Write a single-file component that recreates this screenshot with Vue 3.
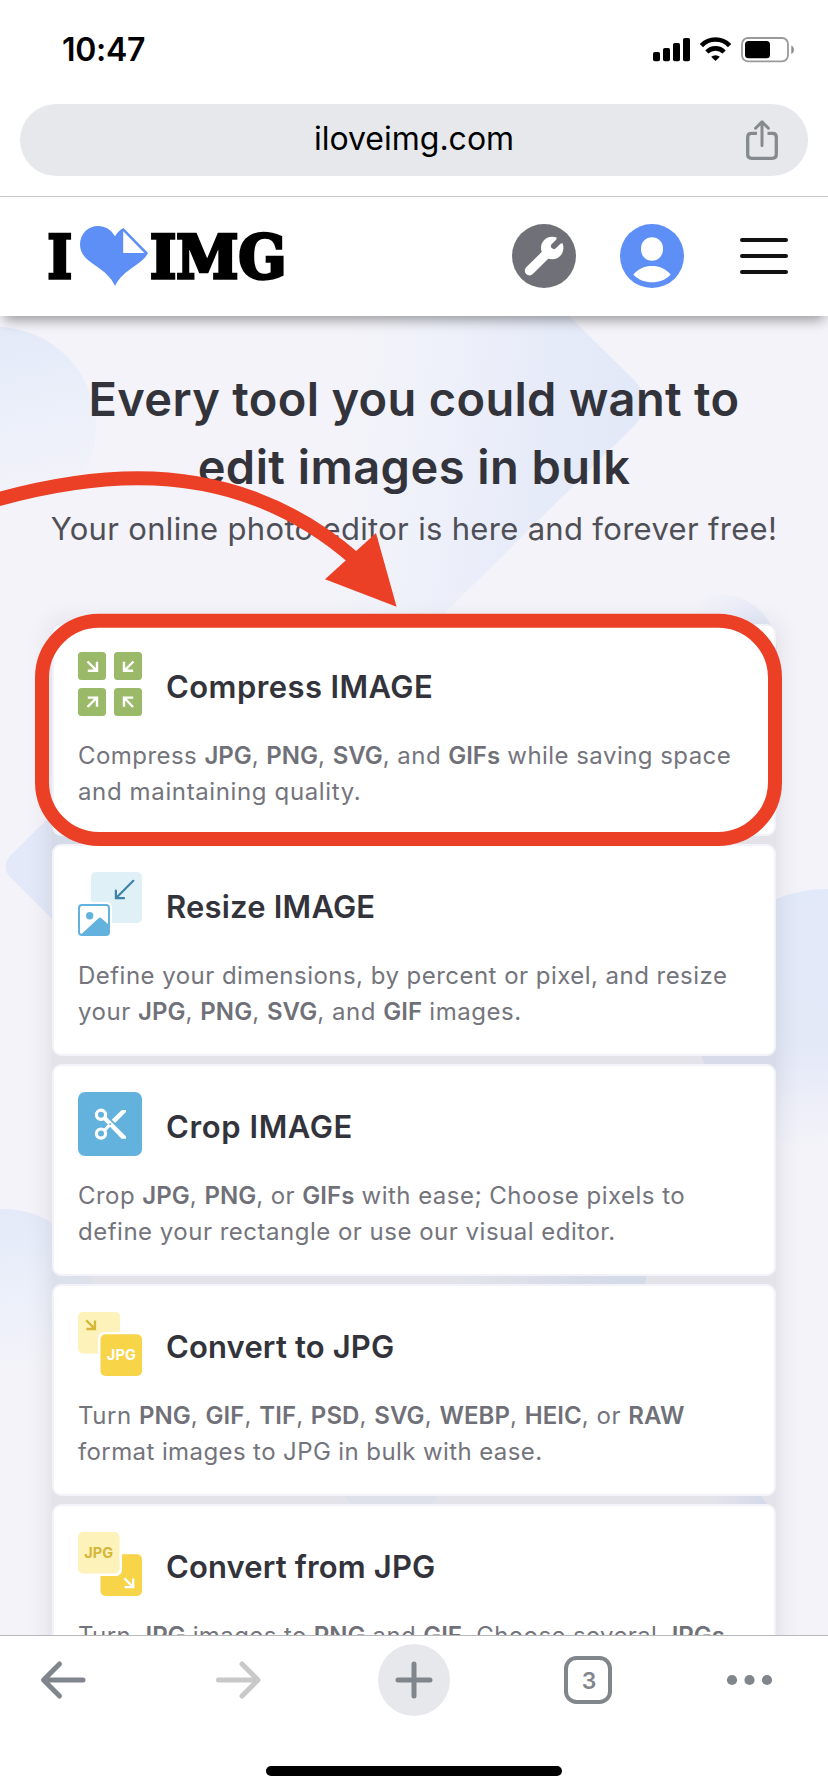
<script setup>
const rawTools = [
  {
    id: 'compress',
    title: 'Compress IMAGE',
    tracking: 0.42,
    lines: [
      ['Compress *JPG*, *PNG*, *SVG*, and *GIFs* while saving space', 0.45],
      ['and maintaining quality.', 0.63],
    ],
  },
  {
    id: 'resize',
    title: 'Resize IMAGE',
    tracking: 0.2,
    lines: [
      ['Define your dimensions, by percent or pixel, and resize', 0.47],
      ['your *JPG*, *PNG*, *SVG*, and *GIF* images.', 0.52],
    ],
  },
  {
    id: 'crop',
    title: 'Crop IMAGE',
    tracking: 0.6,
    lines: [
      ['Crop *JPG*, *PNG*, or *GIFs* with ease; Choose pixels to', 0.47],
      ['define your rectangle or use our visual editor.', 0.5],
    ],
  },
  {
    id: 'to-jpg',
    title: 'Convert to JPG',
    tracking: 0.15,
    lines: [
      ['Turn *PNG*, *GIF*, *TIF*, *PSD*, *SVG*, *WEBP*, *HEIC*, or *RAW*', 0.53],
      ['format images to JPG in bulk with ease.', 0.4],
    ],
  },
  {
    id: 'from-jpg',
    title: 'Convert from JPG',
    tracking: 0.14,
    lines: [['Turn *JPG* images to *PNG* and *GIF*. Choose several *JPGs*', 0.4]],
  },
]

// Text between asterisks is emphasised and set slightly tighter.
const tools = rawTools.map((tool) => ({
  ...tool,
  lines: tool.lines.map(([text, tracking]) =>
    text.split('*').map((part, i) => ({
      text: part,
      bold: i % 2 === 1,
      tracking: i % 2 === 1 ? tracking - 0.45 : tracking,
    })),
  ),
}))
</script>

<template>
  <div class="screen">
    <div class="status">
      <span class="time">10:47</span>
      <svg class="status-icons" width="144" height="30" viewBox="650 35 144 30">
        <rect x="653" y="52" width="7" height="9.3" rx="1.8" />
        <rect x="663" y="48" width="7" height="13.3" rx="1.8" />
        <rect x="673" y="43" width="7" height="18.3" rx="1.8" />
        <rect x="683" y="38" width="7" height="23.3" rx="1.8" />
        <g fill="none" stroke="#000" stroke-width="4.6">
          <path d="M701.4 45.6 A19.5 19.5 0 0 1 729.6 45.6" />
          <path d="M706.9 52 A12 12 0 0 1 724.1 52" />
        </g>
        <path d="M711.2 56.8 A6.5 6.5 0 0 1 719.8 56.8 L715.5 61 Z" />
        <rect x="742" y="38" width="46" height="23.3" rx="6" fill="none" stroke="#9a9a9a" stroke-width="1.8" />
        <rect x="745" y="41" width="25" height="17.3" rx="3.5" />
        <path d="M791.3 45.6 C794.8 47 794.8 52.6 791.3 54 Z" fill="#8c8c8c" />
      </svg>
    </div>

    <div class="address">
      <div class="pill">
        <span class="url">iloveimg.com</span>
        <svg class="share" width="32" height="42" viewBox="0 0 32 42" fill="none" stroke="#858a8f">
          <path d="M11 13.4 H5.5 Q1.7 13.4 1.7 17 V34.6 Q1.7 38.4 5.5 38.4 H26.5 Q30.3 38.4 30.3 34.6 V17 Q30.3 13.4 26.5 13.4 H21.5" stroke-width="3.3" />
          <path d="M16 25.5 V2.5 M9.6 8.2 L16 1.8 L22.4 8.2" stroke-width="3" stroke-linecap="round" stroke-linejoin="round" />
        </svg>
      </div>
    </div>

    <header class="header">
      <svg class="logo" width="240" height="66" viewBox="46 223 240 66">
        <g class="logo-text">
          <text x="47.6" y="278.4" textLength="24.5" lengthAdjust="spacingAndGlyphs">I</text>
          <text x="150" y="278.4" textLength="136.4" lengthAdjust="spacingAndGlyphs">IMG</text>
        </g>
        <path
          d="M115 236.3 C111 229.5 105 226 98 226 C88 226 80 234 80 244.5 C80 255 88 260.5 96 266 C104 271.5 111 277 115 286 C119 277.5 126 272 134 266.5 C141 261.5 145.5 258 148 253 L123.5 228 C120 229.8 117 232.6 115 236.3 Z"
          fill="#5d8ff7"
        />
        <path d="M123.2 231.2 V252.9 H144.4 Z" fill="#fff" />
      </svg>
      <nav class="actions">
        <svg width="64" height="64" viewBox="0 0 64 64">
          <circle cx="32" cy="32" r="32" fill="#707078" />
          <path d="M17.5 46.7 L36 28.4" stroke="#fff" stroke-width="9.4" stroke-linecap="round" />
          <circle cx="40.2" cy="24" r="11.2" fill="#fff" />
          <path d="M42 22 L49 15" stroke="#707078" stroke-width="6" stroke-linecap="round" />
          <path d="M44.3 14 L45.5 18 L52 10 Z M49.5 19.8 L46 18.5 L53 12 Z" fill="#707078" />
        </svg>
        <svg width="64" height="64" viewBox="0 0 64 64">
          <circle cx="32" cy="32" r="32" fill="#5d8ff7" />
          <rect x="21" y="13.3" width="22" height="23.4" rx="11" fill="#fff" />
          <path d="M13.3 50.5 C18.5 44.5 25 42 32 42 C39 42 45.5 44.5 50.7 50.5 C45.5 56 39 58.3 32 58.3 C25 58.3 18.5 56 13.3 50.5 Z" fill="#fff" />
        </svg>
        <svg class="menu" width="48" height="36" viewBox="0 0 48 36" fill="none" stroke="#111" stroke-width="4" stroke-linecap="round">
          <path d="M2 2 H46 M2 18 H46 M2 34 H46" />
        </svg>
      </nav>
    </header>

    <main class="page">
      <svg class="shapes" width="828" height="1319" viewBox="0 316 828 1319">
        <defs>
          <linearGradient id="fadeDown" x1="0.4" y1="0" x2="0.6" y2="1">
            <stop offset="0" stop-color="#e2e9f8" />
            <stop offset="0.5" stop-color="#ecf0fa" />
            <stop offset="0.95" stop-color="#f4f3f9" />
          </linearGradient>
          <linearGradient id="fadeLeft" gradientUnits="userSpaceOnUse" x1="650" y1="420" x2="340" y2="385">
            <stop offset="0" stop-color="#e1e8f7" />
            <stop offset="0.4" stop-color="#e8ecf9" />
            <stop offset="0.75" stop-color="#f0f2fa" />
            <stop offset="1" stop-color="#f4f3f9" />
          </linearGradient>
          <linearGradient id="fadeSide" x1="1" y1="0.4" x2="0.2" y2="0.2">
            <stop offset="0" stop-color="#e3e9f8" />
            <stop offset="1" stop-color="#f4f3f9" />
          </linearGradient>
          <linearGradient id="fadeLow" x1="0.5" y1="0" x2="0.55" y2="1">
            <stop offset="0" stop-color="#e2e9f8" />
            <stop offset="0.6" stop-color="#e4e9f8" />
            <stop offset="1" stop-color="#f4f3f9" />
          </linearGradient>
        </defs>
        <circle cx="-4" cy="427" r="100" fill="url(#fadeDown)" />
        <path d="M384 133 L634 380 Q656 403 634 426 L384 673 L114 403 Z" fill="url(#fadeLeft)" />
        <circle cx="722" cy="650" r="55" fill="url(#fadeSide)" />
        <path d="M90 777 L11 855 Q0 867 11 878 L90 957 Z" fill="#e3e9f8" />
        <circle cx="826" cy="1019" r="130" fill="url(#fadeLow)" />
        <circle cx="4" cy="1299" r="90" fill="url(#fadeDown)" />
        <rect x="430" y="1180" width="216" height="110" rx="10" fill="url(#fadeSide)" />
        <path d="M390 1453 L440 1495 L390 1543 L340 1493 Z" fill="#edf0f9" />
        <path d="M740 1470 L775 1513 H700 Z" fill="url(#fadeSide)" />
      </svg>

      <section class="hero">
        <h1>
          <span class="h1-a">Every tool you could want to</span>
          <span class="h1-b">edit images in bulk</span>
        </h1>
        <p class="sub">Your online photo editor is here and forever free!</p>
      </section>

      <section class="tools">
        <article v-for="tool in tools" :key="tool.id" class="card">
          <div class="card-head">
            <svg v-if="tool.id === 'compress'" width="64" height="64" viewBox="0 0 64 64">
              <g fill="#9aba69">
                <rect width="28" height="28" rx="3.5" />
                <rect x="36" width="28" height="28" rx="3.5" />
                <rect y="36" width="28" height="28" rx="3.5" />
                <rect x="36" y="36" width="28" height="28" rx="3.5" />
              </g>
              <g fill="none" stroke="#fff" stroke-width="2.4">
                <path d="M9.5 9.5 L18.3 18.3 M19 9.8 V18.8 H9.8" />
                <path d="M55.5 9.5 L46.7 18.3 M46 9.8 V18.8 H55.2" />
                <path d="M9.5 55 L18.3 46.2 M9.8 45.6 H19 V54.8" />
                <path d="M55 55 L46.7 46.2 M55.2 45.6 H46 V54.8" />
              </g>
            </svg>
            <svg v-else-if="tool.id === 'resize'" width="64" height="64" viewBox="0 0 64 64">
              <rect x="13" width="51" height="51" rx="5" fill="#dff0f7" />
              <path d="M55.3 8.8 L38.6 25.5 M37.9 18.5 V26.2 H46" fill="none" stroke="#3f82a8" stroke-width="2.2" stroke-linecap="round" />
              <rect x="-2" y="30" width="36" height="36" rx="5" fill="#fff" />
              <rect x="1" y="33" width="30" height="30" rx="3" fill="#fff" stroke="#63b1dd" stroke-width="2" />
              <circle cx="11.7" cy="43.7" r="3.7" fill="#63b1dd" />
              <path d="M3.5 62 L20.5 46.2 Q22 44.8 23.5 46.2 L31 53 V61 Q31 63 29 63 H4 Z" fill="#63b1dd" />
            </svg>
            <svg v-else-if="tool.id === 'crop'" width="64" height="64" viewBox="0 0 64 64">
              <rect width="64" height="64" rx="7" fill="#63b1dd" />
              <g fill="none" stroke="#fff" stroke-width="3.2">
                <circle cx="23" cy="22.8" r="4.6" />
                <circle cx="23" cy="41.6" r="4.6" />
                <path d="M26.5 38.3 L31.5 33.2" />
              </g>
              <path d="M25 27.6 L28 24.6 L48 44.5 V46.7 H43.6 Z" fill="#fff" />
              <path d="M33.8 27.8 L43.8 17.9 H48 V20 L37 30.9 Z" fill="#fff" />
              <circle cx="32.2" cy="32" r="0.9" fill="#63b1dd" />
            </svg>
            <svg v-else-if="tool.id === 'to-jpg'" width="64" height="64" viewBox="0 0 64 64">
              <rect width="42" height="41.5" rx="5" fill="#fcf2ba" />
              <path d="M8.2 8.2 L16.4 16.4 M17 8.5 V17 H8.4" fill="none" stroke="#d6b636" stroke-width="2.3" />
              <rect x="20" y="20" width="46" height="46" rx="6" fill="#fff" />
              <rect x="22.5" y="22.3" width="41.5" height="41.7" rx="5" fill="#f8d448" />
              <text class="badge-text" x="28.8" y="48.3" textLength="29" lengthAdjust="spacing" fill="#fff">JPG</text>
            </svg>
            <svg v-else width="64" height="64" viewBox="0 0 64 64">
              <rect x="22.5" y="22.3" width="41.5" height="41.7" rx="5" fill="#f8d448" />
              <path d="M46.3 46.3 L54.6 54.6 M55.2 46.6 V55.2 H46.6" fill="none" stroke="#fff" stroke-width="2.3" />
              <rect x="-2" y="-2" width="46" height="46" rx="6" fill="#fff" />
              <rect width="41.5" height="41.5" rx="5" fill="#fcf2ba" />
              <text class="badge-text" x="6.2" y="26.2" textLength="29" lengthAdjust="spacing" fill="#d6b636">JPG</text>
            </svg>
            <h2 :style="{ letterSpacing: tool.tracking + 'px' }">{{ tool.title }}</h2>
          </div>
          <p class="desc">
            <span v-for="(line, i) in tool.lines" :key="i" class="line"><span
              v-for="(part, j) in line"
              :key="j"
              :class="{ bold: part.bold }"
              :style="{ letterSpacing: part.tracking + 'px' }"
            >{{ part.text }}</span></span>
          </p>
        </article>
      </section>
    </main>

    <footer class="toolbar">
      <svg class="buttons" width="828" height="90" viewBox="0 1636 828 90" fill="none" stroke="#80868b" stroke-width="5" stroke-linecap="round">
        <g stroke-linejoin="round">
          <path d="M83 1680 H44 M59.5 1664 L43.5 1680 L59.5 1696" />
          <path d="M218.5 1680 H257 M242 1664 L258 1680 L242 1696" stroke="#c8c8c8" />
        </g>
        <circle cx="414" cy="1680" r="36" fill="#e7e8ec" stroke="none" />
        <path d="M398 1680 H430 M414 1664 V1696" />
        <rect x="566" y="1658" width="44" height="44" rx="10.5" stroke-width="4" />
        <text class="tab-count" x="589" y="1689" text-anchor="middle" fill="#80868b" stroke="none">3</text>
        <g fill="#80868b" stroke="none">
          <circle cx="732" cy="1680" r="5.1" />
          <circle cx="749.5" cy="1680" r="5.1" />
          <circle cx="767" cy="1680" r="5.1" />
        </g>
      </svg>
      <div class="home"></div>
    </footer>

    <svg class="annotation" width="828" height="560" viewBox="0 460 828 560">
      <rect x="42" y="620.8" width="733" height="218.2" rx="57" fill="none" stroke="#eb4026" stroke-width="14" />
      <path d="M-8 501 C45 486 95 478.3 138 478.3 C222 478.3 296 507 356 560" fill="none" stroke="#eb4026" stroke-width="14" />
      <path d="M376 533 L396.6 606.8 L325 579.2 Z" fill="#eb4026" />
    </svg>
  </div>
</template>

<style>
body {
  margin: 0;
  background: #fff;
}
</style>

<style scoped>
.screen {
  position: relative;
  display: flex;
  flex-direction: column;
  width: 828px;
  height: 1792px;
  overflow: hidden;
  background: #fff;
  font-family: Inter, "Liberation Sans", sans-serif;
}
svg {
  display: block;
  flex: none;
}
.status {
  display: flex;
  justify-content: space-between;
  align-items: flex-start;
  height: 104px;
  padding: 0 34px 0 62px;
  box-sizing: border-box;
}
.time {
  margin-top: 30px;
  font-size: 32px;
  font-weight: 600;
  line-height: 40px;
  letter-spacing: -0.3px;
  color: #000;
}
.status-icons {
  margin-top: 35px;
}
.address {
  height: 93px;
  padding: 0 20px;
  box-sizing: border-box;
  border-bottom: 1px solid #c9c9cb;
}
.pill {
  display: grid;
  grid-template-columns: 1fr auto 1fr;
  align-items: center;
  height: 72px;
  border-radius: 36px;
  background: #e7e8ec;
}
.url {
  grid-column: 2;
  font-size: 32px;
  line-height: 40px;
  margin-top: -2px;
  color: #000;
}
.share {
  justify-self: end;
  margin: 1px 30px 0 0;
}
.header {
  position: relative;
  z-index: 1;
  display: flex;
  justify-content: space-between;
  align-items: center;
  height: 119px;
  padding: 0 40px 1px 46px;
  box-sizing: border-box;
  background: #fff;
  box-shadow: 0 8px 12px -4px rgba(0, 0, 0, 0.38);
}
.logo {
  overflow: visible;
}
.logo-text {
  font: bold 60px "DejaVu Serif", serif;
  fill: #000;
  stroke: #000;
  stroke-width: 3.4;
}
.actions {
  display: flex;
  align-items: center;
  gap: 44px;
}
.menu {
  margin-left: 12px;
}
.page {
  position: relative;
  height: 1319px;
  overflow: hidden;
  background: #f4f3f9;
}
.shapes {
  position: absolute;
  top: 0;
  left: 0;
}
.hero {
  position: relative;
  padding-top: 49px;
  height: 308px;
  box-sizing: border-box;
  text-align: center;
}
h1 {
  margin: 0;
  font-size: 47px;
  font-weight: 600;
  line-height: 68px;
  color: #33333b;
}
h1 span {
  display: block;
}
.h1-a {
  letter-spacing: 0.32px;
}
.h1-b {
  letter-spacing: 0.44px;
}
.sub {
  margin: 6px 0 0;
  font-size: 31px;
  font-weight: 400;
  line-height: 44px;
  letter-spacing: 0.32px;
  white-space: nowrap;
  color: #4f4f57;
}
.tools {
  position: relative;
  display: flex;
  flex-direction: column;
  gap: 8px;
  margin: 0 52px;
  border-radius: 8px;
  background: rgba(40, 40, 50, 0.075);
  box-shadow: 0 0 26px rgba(40, 40, 50, 0.12);
}
.card {
  height: 212px;
  padding: 26px 24px 0;
  box-sizing: border-box;
  border: 2px solid #f2f2f8;
  border-radius: 9px;
  background: #fff;
}
.card-head {
  display: flex;
  gap: 24px;
  height: 64px;
}
h2 {
  margin: 11px 0 0;
  font-size: 31px;
  font-weight: 600;
  line-height: 48px;
  white-space: nowrap;
  color: #33333b;
}
.desc {
  margin: 22px 0 0;
  font-size: 24px;
  font-weight: 400;
  line-height: 36px;
  color: #74747c;
}
.line {
  display: block;
  white-space: pre;
}
.bold {
  font-weight: 600;
  color: #707078;
}
.badge-text {
  font: 700 14.5px Inter, "Liberation Sans", sans-serif;
}
.toolbar {
  display: flex;
  flex-direction: column;
  align-items: center;
  justify-content: space-between;
  height: 157px;
  padding-bottom: 16px;
  box-sizing: border-box;
  border-top: 1px solid #b9b9bb;
  background: #fff;
}
.tab-count {
  font: 600 23px Inter, "Liberation Sans", sans-serif;
}
.home {
  width: 296px;
  height: 10px;
  border-radius: 5px;
  background: #000;
}
.annotation {
  position: absolute;
  top: 460px;
  left: 0;
  z-index: 2;
}
</style>
